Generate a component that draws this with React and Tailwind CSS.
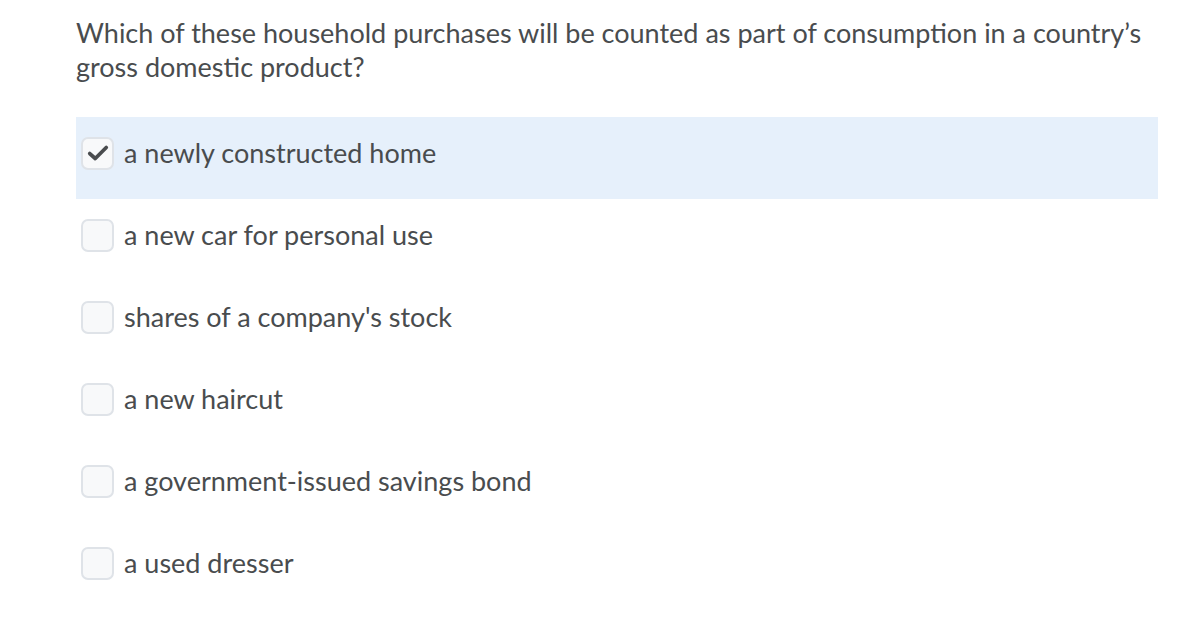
const options = [
  { label: "a newly constructed home", checked: true },
  { label: "a new car for personal use" },
  { label: "shares of a company's stock" },
  { label: "a new haircut" },
  { label: "a government-issued savings bond" },
  { label: "a used dresser" },
];

function Checkbox({ checked }) {
  return (
    <span className="flex h-[33px] w-[33px] shrink-0 items-center justify-center rounded-[7px] border-2 border-[#dfe3e8] bg-[#f8f9fa]">
      {checked && (
        <svg width="22" height="18" viewBox="0 0 20 16">
          <path
            d="M2.5 8.5 L7.5 13 L17.5 3"
            fill="none"
            stroke="#494c4e"
            strokeWidth="3.4"
            strokeLinecap="round"
            strokeLinejoin="round"
          />
        </svg>
      )}
    </span>
  );
}

export default function App() {
  return (
    <div className="min-h-[630px] w-[1200px] bg-white pl-[76px] pr-[42px] pt-[16px] font-['Lato','Noto_Sans',sans-serif] text-[#494c4e]">
      <p className="text-[27px] leading-[34px]">
        Which of these household purchases will be counted as part of consumption in a country’s
        <br />
        gross domestic product?
      </p>

      <div className="mt-[33px] flex flex-col">
        {options.map((o) => (
          <label
            key={o.label}
            className={
              "flex h-[82px] items-center gap-[10px] pb-[10px] pl-[5px] " +
              (o.checked ? "bg-[#e6f0fb]" : "")
            }
          >
            <Checkbox checked={o.checked} />
            <span className="text-[27px] leading-[34px]">{o.label}</span>
          </label>
        ))}
      </div>
    </div>
  );
}
